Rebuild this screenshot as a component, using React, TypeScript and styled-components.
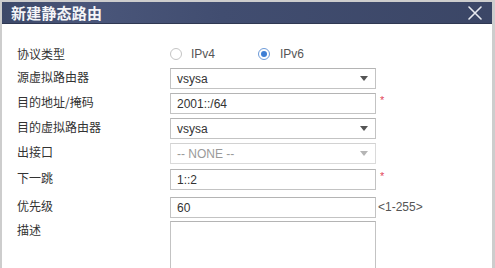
import React, { FC } from 'react';
import styled, { createGlobalStyle } from 'styled-components';

const GlobalStyle = createGlobalStyle`
  html, body {
    margin: 0;
    padding: 0;
    background: #cfcfcf;
    overflow: hidden;
  }
`

const StyledFrame = styled.div`
  width: 495px;
  height: 268px;
  box-sizing: border-box;
  padding: 2px 3px 0 2px;
  background: #cdcdcd;
  overflow: hidden;
`

const StyledDialog = styled.div`
  display: flex;
  flex-direction: column;
  height: 100%;
  background: #fff;
`

const StyledTitleBar = styled.div`
  display: flex;
  align-items: center;
  justify-content: space-between;
  height: 27px;
  padding: 0 8px 0 9px;
  background: linear-gradient(to right, #3d4969 0%, #4a567a 18%, #414d70 45%, #3b4666 100%);
  border-bottom: 1px solid #2f3852;
`

const StyledTitle = styled.h1`
  margin: 0;
  font-family: "Noto Sans CJK SC", "Microsoft YaHei", sans-serif;
  font-size: 15px;
  font-weight: bold;
  color: #f4f5f8;
  letter-spacing: 0.2px;
`

const StyledClose = styled.button`
  display: flex;
  align-items: center;
  justify-content: center;
  width: 18px;
  height: 18px;
  padding: 0;
  border: none;
  background: none;
  cursor: pointer;
`

const StyledForm = styled.form`
  display: flex;
  flex-direction: column;
  padding: 21px 0 0 15px;
`

const StyledRow = styled.div<{ $mt: number }>`
  display: flex;
  align-items: flex-start;
  margin-top: ${p => p.$mt}px;
`

const StyledLabel = styled.label`
  width: 153px;
  flex: none;
  font-family: "Noto Sans CJK SC", "Microsoft YaHei", sans-serif;
  font-size: 12px;
  line-height: 17px;
  color: #333;
`

const StyledRadioGroup = styled.div`
  display: flex;
  align-items: center;
  height: 17px;
`

const StyledRadioOption = styled.span`
  display: flex;
  align-items: center;
  width: 88px;
  font-family: "Liberation Sans", Arial, sans-serif;
  font-size: 12px;
  color: #555;
`

const StyledRadioDot = styled.span<{ $checked?: boolean }>`
  display: inline-flex;
  align-items: center;
  justify-content: center;
  width: 12px;
  height: 12px;
  margin-right: ${p => (p.$checked ? 10 : 9)}px;
  box-sizing: border-box;
  border-radius: 50%;
  border: 1px solid ${p => (p.$checked ? '#6c9ad8' : '#c4c4c4')};
  background: #fff;

  &::after {
    content: '';
    display: ${p => (p.$checked ? 'block' : 'none')};
    width: 6px;
    height: 6px;
    border-radius: 50%;
    background: #3f7fd4;
  }
`

const StyledField = styled.div<{ $disabled?: boolean; $tall?: boolean }>`
  display: flex;
  align-items: center;
  justify-content: space-between;
  box-sizing: border-box;
  width: 206px;
  height: ${p => (p.$tall ? 62 : 21)}px;
  padding: 0 6px;
  border: 1px solid ${p => (p.$disabled ? '#dadada' : '#c3c3c3')};
  border-top-color: ${p => (p.$disabled ? '#d2d2d2' : '#b4b4b4')};
  background: #fff;
  font-family: "Liberation Sans", Arial, sans-serif;
  font-size: 12px;
  color: ${p => (p.$disabled ? '#9a9a9a' : '#333')};
`

const StyledArrow = styled.span<{ $disabled?: boolean }>`
  width: 0;
  height: 0;
  margin-right: 1px;
  border-left: 4px solid transparent;
  border-right: 4px solid transparent;
  border-top: 5px solid ${p => (p.$disabled ? '#b5b5b5' : '#555')};
`

const StyledRequired = styled.span`
  margin-left: 4px;
  margin-top: 2px;
  font-family: "Liberation Sans", Arial, sans-serif;
  font-size: 11px;
  line-height: 11px;
  color: #e2455a;
`

const StyledHint = styled.span`
  margin-left: 2px;
  line-height: 21px;
  font-family: "Liberation Sans", Arial, sans-serif;
  font-size: 12px;
  color: #555;
`

const CloseIcon: FC = () => (
  <svg width="14" height="14" viewBox="0 0 14 14">
    <path d="M1 1 L13 13 M13 1 L1 13" stroke="#e8eaf0" strokeWidth="1.6" strokeLinecap="round" />
  </svg>
)

const Select: FC<{ value: string; disabled?: boolean }> = ({ value, disabled }) => (
  <StyledField $disabled={disabled}>
    <span>{value}</span>
    <StyledArrow $disabled={disabled} />
  </StyledField>
)

export default function App() {
  return (
    <>
      <GlobalStyle />
      <StyledFrame>
        <StyledDialog>
          <StyledTitleBar>
            <StyledTitle>新建静态路由</StyledTitle>
            <StyledClose aria-label="close">
              <CloseIcon />
            </StyledClose>
          </StyledTitleBar>
          <StyledForm>
            <StyledRow $mt={0}>
              <StyledLabel>协议类型</StyledLabel>
              <StyledRadioGroup>
                <StyledRadioOption>
                  <StyledRadioDot />
                  IPv4
                </StyledRadioOption>
                <StyledRadioOption>
                  <StyledRadioDot $checked />
                  IPv6
                </StyledRadioOption>
              </StyledRadioGroup>
            </StyledRow>
            <StyledRow $mt={6}>
              <StyledLabel>源虚拟路由器</StyledLabel>
              <Select value="vsysa" />
            </StyledRow>
            <StyledRow $mt={4}>
              <StyledLabel>目的地址/掩码</StyledLabel>
              <StyledField>2001::/64</StyledField>
              <StyledRequired>*</StyledRequired>
            </StyledRow>
            <StyledRow $mt={4}>
              <StyledLabel>目的虚拟路由器</StyledLabel>
              <Select value="vsysa" />
            </StyledRow>
            <StyledRow $mt={4}>
              <StyledLabel>出接口</StyledLabel>
              <Select value="-- NONE --" disabled />
            </StyledRow>
            <StyledRow $mt={5}>
              <StyledLabel>下一跳</StyledLabel>
              <StyledField>1::2</StyledField>
              <StyledRequired>*</StyledRequired>
            </StyledRow>
            <StyledRow $mt={7}>
              <StyledLabel>优先级</StyledLabel>
              <StyledField>60</StyledField>
              <StyledHint>&lt;1-255&gt;</StyledHint>
            </StyledRow>
            <StyledRow $mt={3}>
              <StyledLabel>描述</StyledLabel>
              <StyledField $tall />
            </StyledRow>
          </StyledForm>
        </StyledDialog>
      </StyledFrame>
    </>
  )
}
